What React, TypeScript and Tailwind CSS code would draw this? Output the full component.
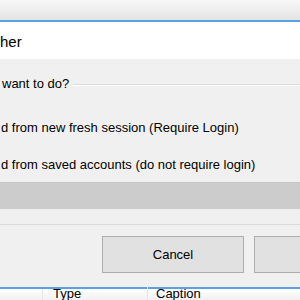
const font = { fontFamily: '"Liberation Sans", Arial, sans-serif' }

export default function App() {
  return (
    <div className="w-[300px] h-[300px] overflow-hidden bg-[#f0f0f0] flex flex-col text-[#000]" style={font}>
      {/* parent window chrome */}
      <div className="h-[20px] shrink-0 bg-gradient-to-b from-[#f8f8f8] to-[#e3e3e3]" />
      <div className="h-[2px] shrink-0 bg-[#5aa1e3]" />

      {/* title strip */}
      <div className="h-[37px] shrink-0 bg-white flex items-center">
        <span className="text-[15px] leading-[18px] pt-[2px]">her</span>
      </div>

      {/* group box */}
      <div className="h-[123px] shrink-0 flex flex-col text-[13px] leading-[16px]">
        <div className="flex items-center mt-[17px] pl-[2px]">
          <span>want to do?</span>
          <div className="flex-1 ml-[4px] mt-[1px] flex flex-col">
            <div className="h-px bg-[#dcdcdc]" />
            <div className="h-px bg-white" />
          </div>
        </div>
        <div className="mt-[28px] pl-[1px]">d from new fresh session (Require Login)</div>
        <div className="mt-[21px] pl-[1px]">d from saved accounts (do not require login)</div>
      </div>

      {/* selected / disabled band */}
      <div className="h-[27px] shrink-0 bg-[#cccccc] border-t border-[#c4c4c4]" />

      <div className="h-[15px] shrink-0" />
      <div className="h-px shrink-0 bg-[#dadada]" />

      {/* buttons */}
      <div className="h-[62px] shrink-0 flex items-start pt-[11px] pl-[102px] gap-[10px]">
        <button className="w-[142px] h-[37px] shrink-0 bg-[#e1e1e1] border border-[#adadad] text-[13px]">
          Cancel
        </button>
        <button className="w-[100px] h-[37px] shrink-0 bg-[#e1e1e1] border border-[#adadad] text-[13px]" />
      </div>

      {/* list view behind */}
      <div className="h-[2px] shrink-0 bg-[#5aa1e3]" />
      <div className="flex-1 bg-gradient-to-b from-white to-[#eeeeee] flex text-[13px] leading-[16px]">
        <div className="w-[43px] shrink-0 border-r border-[#e5e5e5]" />
        <div className="w-[105px] shrink-0 border-r border-[#e5e5e5] pl-[10px] -mt-[3px]">Type</div>
        <div className="flex-1 pl-[8px] -mt-[3px]">Caption</div>
      </div>
    </div>
  )
}
